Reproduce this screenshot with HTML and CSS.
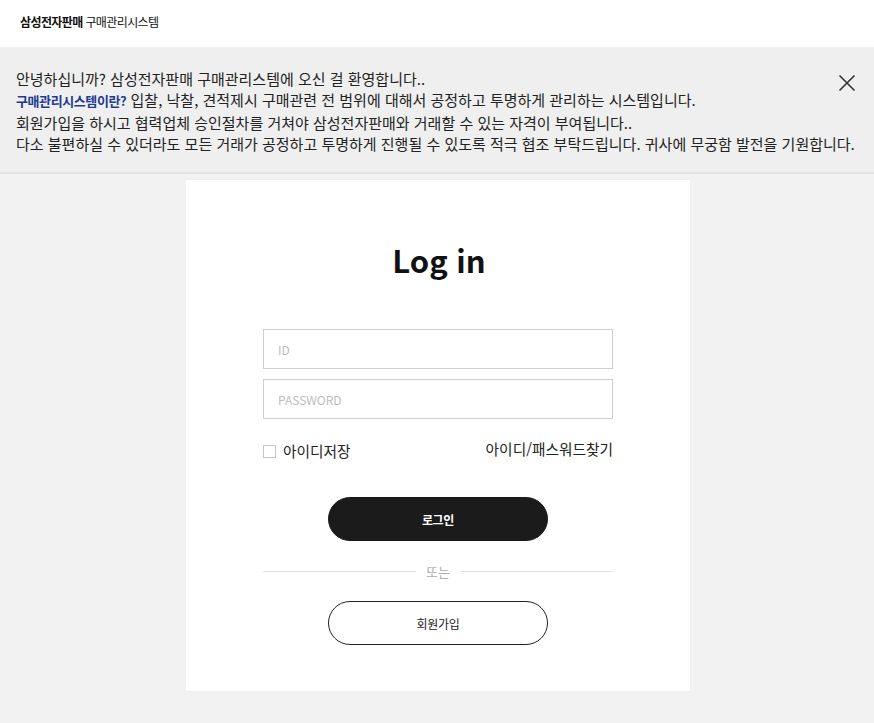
FILE: index.html
```html
<!DOCTYPE html>
<html lang="ko">
<head>
<meta charset="utf-8">
<title>삼성전자판매 구매관리시스템</title>
<link rel="stylesheet" href="styles.css">
</head>
<body>
<header class="top">
  <div class="brand"><b>삼성전자판매</b> 구매관리시스템</div>
</header>
<section class="notice">
  <p>안녕하십니까? 삼성전자판매 구매관리스템에 오신 걸 환영합니다..</p>
  <p><span class="hl">구매관리시스템이란?</span> 입찰, 낙찰, 견적제시 구매관련 전 범위에 대해서 공정하고 투명하게 관리하는 시스템입니다.</p>
  <p>회원가입을 하시고 협력업체 승인절차를 거쳐야 삼성전자판매와 거래할 수 있는 자격이 부여됩니다..</p>
  <p>다소 불편하실 수 있더라도 모든 거래가 공정하고 투명하게 진행될 수 있도록 적극 협조 부탁드립니다. 귀사에 무궁함 발전을 기원합니다.</p>
  <button class="close" aria-label="닫기">
    <svg width="18" height="18" viewBox="0 0 18 18"><path d="M1.5 1.5 L16.5 16.5 M16.5 1.5 L1.5 16.5" stroke="#333" stroke-width="1.6" fill="none"/></svg>
  </button>
</section>
<main class="wrap">
  <div class="card">
    <h1 class="title">Log in</h1>
    <div class="fields">
      <input class="field" type="text" placeholder="ID">
      <input class="field" type="password" placeholder="PASSWORD">
    </div>
    <div class="opts">
      <label class="save"><span class="box"></span>아이디저장</label>
      <a class="find">아이디/패스워드찾기</a>
    </div>
    <button class="btn btn-dark">로그인</button>
    <div class="divider"><span>또는</span></div>
    <button class="btn btn-light">회원가입</button>
  </div>
</main>
</body>
</html>
```
FILE: styles.css
```css
* { box-sizing: border-box; }
html, body { margin: 0; padding: 0; }
body {
  background: #f2f2f2;
  font-family: "Noto Sans CJK KR", "Noto Sans", sans-serif;
  color: #222;
  width: 874px;
  height: 723px;
  overflow: hidden;
}
.top {
  background: #fff;
  height: 47px;
  display: flex;
  align-items: center;
  padding-left: 20px;
}
.brand {
  font-size: 12px;
  letter-spacing: -0.6px;
  color: #111;
  margin-top: -5px;
}
.brand b { font-weight: 700; }
.notice {
  position: relative;
  background: #efefef;
  border-bottom: 2px solid #e3e3e3;
  padding: 21px 16px 16px;
  height: 127px;
}
.notice p {
  margin: 0;
  font-size: 15px;
  line-height: 21.3px;
  letter-spacing: 0;
  color: #222;
  white-space: nowrap;
}
.hl { color: #1f3a93; font-size: 13px; font-weight: 700; letter-spacing: -0.4px; }
.close {
  position: absolute;
  top: 27px;
  right: 18px;
  width: 18px;
  height: 18px;
  padding: 0;
  border: 0;
  background: none;
}
.wrap {
  display: flex;
  justify-content: center;
  padding-top: 6px;
  padding-left: 2px;
}
.card {
  width: 504px;
  height: 511px;
  background: #fff;
  display: flex;
  flex-direction: column;
  align-items: center;
  padding: 56px 77px 0;
  box-shadow: 0 0 2px rgba(0,0,0,0.04);
}
.title {
  margin: 0 0 0 2px;
  font-size: 31px;
  font-weight: 700;
  line-height: 48px;
  color: #111;
  letter-spacing: 0;
}
.fields {
  width: 350px;
  display: flex;
  flex-direction: column;
  gap: 10px;
  margin-top: 45px;
}
.field {
  width: 350px;
  height: 40px;
  border: 1px solid #cfcfcf;
  padding: 0 14px;
  font-family: inherit;
  font-size: 12px;
  outline: none;
}
.field::placeholder { color: #bdbdbd; }
.opts {
  width: 350px;
  display: flex;
  justify-content: space-between;
  align-items: center;
  margin-top: 21px;
  font-size: 14.7px;
  color: #222;
  letter-spacing: 0;
}
.save { display: flex; align-items: center; }
.box {
  width: 13px;
  height: 13px;
  border: 1px solid #c6c6c6;
  background: #fff;
  margin-right: 7px;
  margin-top: 2px;
}
.find { color: #222; margin-top: -4px; }
.btn {
  width: 220px;
  height: 44px;
  border-radius: 22px;
  font-family: inherit;
  font-size: 12px;
  letter-spacing: -0.3px;
  cursor: pointer;
}
.btn-dark {
  background: #1b1b1b;
  color: #fff;
  border: 1px solid #1b1b1b;
  font-weight: 700;
  margin-top: 36px;
}
.btn-light {
  background: #fff;
  color: #222;
  border: 1px solid #222;
  margin-top: 18px;
}
.divider {
  width: 350px;
  display: flex;
  align-items: center;
  margin-top: 18px;
  font-size: 13px;
  color: #b0b0b0;
  height: 24px;
}
.divider::before, .divider::after {
  content: "";
  flex: 1;
  height: 1px;
  background: #e2e2e2;
}
.divider span { padding: 0 10px; }
```
